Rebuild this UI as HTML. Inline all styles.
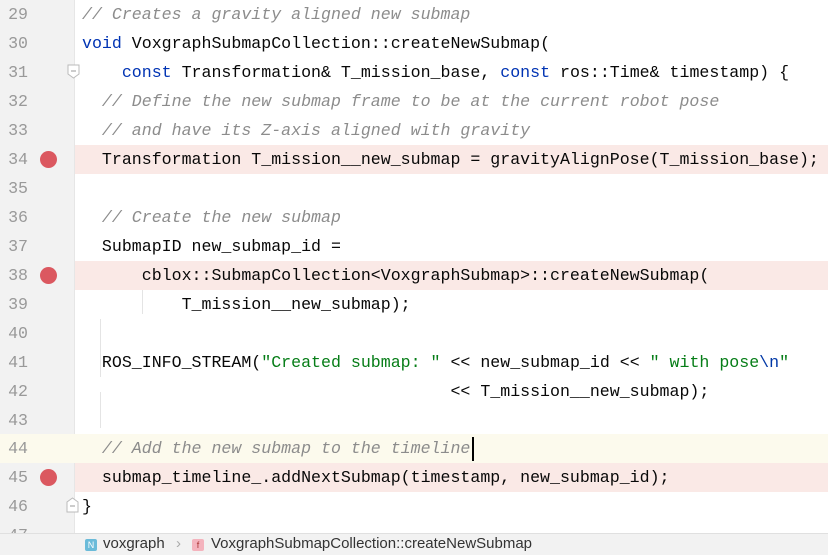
<!DOCTYPE html>
<html><head><style>
body{margin:0;width:828px;height:554px;overflow:hidden;background:#fff;position:relative;font-family:"Liberation Mono",monospace;}
.gut{position:absolute;left:0;top:0;width:74px;height:533px;background:#f2f2f2;border-right:1px solid #e6e6e6;}
.row{position:absolute;left:0;width:828px;height:29px;}
.num{position:absolute;left:0;width:28px;text-align:right;font-size:16.6px;line-height:29px;color:#999;}
.code{position:absolute;left:82px;font-size:16.6px;line-height:29px;color:#080808;white-space:pre;}
.bp{position:absolute;left:40px;top:6px;width:17px;height:17px;border-radius:50%;background:#db5860;}
.hl{position:absolute;left:75px;right:0;top:0;bottom:0;background:#fae9e6;}
.k{color:#0033b3}.c{color:#8c8c8c;font-style:italic}.s{color:#067d17}.e{color:#0037a6}
.status{position:absolute;left:0;top:533px;width:828px;height:21px;background:#f2f2f2;border-top:1px solid #e0e0e0;font-family:"Liberation Sans",sans-serif;font-size:15px;color:#333;}
</style></head><body>
<div class="gut"></div>
<div class="row" style="top:434px;background:#fcfaed"></div>
<div style="position:absolute;left:100px;top:319px;width:1px;height:58px;background:#e4e4e4"></div>
<div style="position:absolute;left:100px;top:392px;width:1px;height:36px;background:#e4e4e4"></div>
<div style="position:absolute;left:142px;top:290px;width:1px;height:24px;background:#e4e4e4"></div>

<div class="row" style="top:0"><div class="num">29</div><div class="code"><span class="c">// Creates a gravity aligned new submap</span></div></div>
<div class="row" style="top:29px"><div class="num">30</div><div class="code"><span class="k">void</span> VoxgraphSubmapCollection::createNewSubmap(</div></div>
<div class="row" style="top:58px"><div class="num">31</div><div class="code">    <span class="k">const</span> Transformation&amp; T_mission_base, <span class="k">const</span> ros::Time&amp; timestamp) {</div>
<svg style="position:absolute;left:67px;top:6px" width="14" height="16"><path d="M1 1H12V10L6.5 14L1 10Z" fill="#fff" stroke="#bbb"/><path d="M4 7H9" stroke="#999"/></svg></div>
<div class="row" style="top:87px"><div class="num">32</div><div class="code">  <span class="c">// Define the new submap frame to be at the current robot pose</span></div></div>
<div class="row" style="top:116px"><div class="num">33</div><div class="code">  <span class="c">// and have its Z-axis aligned with gravity</span></div></div>
<div class="row" style="top:145px"><div class="hl"></div><div class="num">34</div><div class="bp"></div><div class="code">  Transformation T_mission__new_submap = gravityAlignPose(T_mission_base);</div></div>
<div class="row" style="top:174px"><div class="num">35</div></div>
<div class="row" style="top:203px"><div class="num">36</div><div class="code">  <span class="c">// Create the new submap</span></div></div>
<div class="row" style="top:232px"><div class="num">37</div><div class="code">  SubmapID new_submap_id =</div></div>
<div class="row" style="top:261px"><div class="hl"></div><div class="num">38</div><div class="bp"></div><div class="code">      cblox::SubmapCollection&lt;VoxgraphSubmap&gt;::createNewSubmap(</div></div>
<div class="row" style="top:290px"><div class="num">39</div><div class="code">          T_mission__new_submap);</div></div>
<div class="row" style="top:319px"><div class="num">40</div></div>
<div class="row" style="top:348px"><div class="num">41</div><div class="code">  ROS_INFO_STREAM(<span class="s">"Created submap: "</span> &lt;&lt; new_submap_id &lt;&lt; <span class="s">" with pose<span class="e">\n</span>"</span></div></div>
<div class="row" style="top:377px"><div class="num">42</div><div class="code">                                     &lt;&lt; T_mission__new_submap);</div></div>
<div class="row" style="top:406px"><div class="num">43</div></div>
<div class="row" style="top:434px"><div class="num">44</div><div class="code">  <span class="c">// Add the new submap to the timeline</span></div>
<div style="position:absolute;left:472px;top:3px;width:2px;height:24px;background:#000"></div></div>
<div class="row" style="top:463px"><div class="hl"></div><div class="num">45</div><div class="bp"></div><div class="code">  submap_timeline_.addNextSubmap(timestamp, new_submap_id);</div></div>
<div class="row" style="top:492px"><div class="num">46</div><div class="code">}</div>
<svg style="position:absolute;left:66px;top:5px" width="14" height="16"><path d="M1 15H12V5L6.5 1L1 5Z" fill="#fff" stroke="#bbb"/><path d="M4 9H9" stroke="#999"/></svg></div>
<div class="row" style="top:521px"><div class="num" style="top:0">47</div></div>

<div class="status">
<div style="position:absolute;left:85px;top:5px;width:12px;height:12px;background:#6bbbd9;border-radius:2px;color:#fff;font-size:9px;line-height:12px;text-align:center">N</div>
<div style="position:absolute;left:103px;top:1px">voxgraph</div>
<div style="position:absolute;left:176px;top:1px;color:#aaa">›</div>
<div style="position:absolute;left:192px;top:5px;width:12px;height:12px;background:#f4b3bd;border-radius:2px;color:#a33;font-size:9px;line-height:12px;text-align:center">f</div>
<div style="position:absolute;left:211px;top:1px">VoxgraphSubmapCollection::createNewSubmap</div>
</div>
</body></html>
